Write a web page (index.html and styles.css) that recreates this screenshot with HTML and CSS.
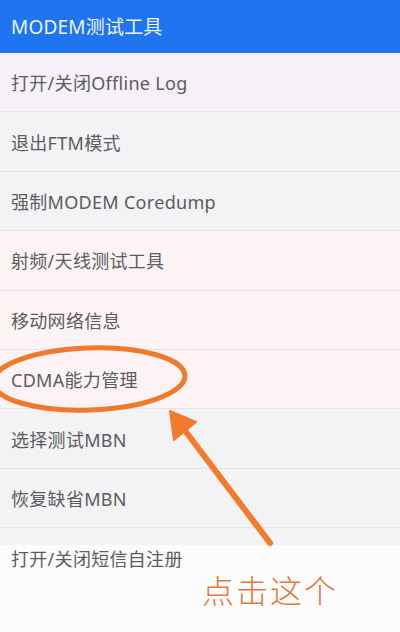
FILE: index.html
```html
<!DOCTYPE html>
<html lang="zh">
<head>
<meta charset="utf-8">
<link rel="stylesheet" href="styles.css">
</head>
<body>
<div class="screen">
  <header class="appbar">MODEM测试工具</header>
  <ul class="menu">
    <li class="item tint-a">打开/关闭Offline Log</li>
    <li class="item">退出FTM模式</li>
    <li class="item">强制MODEM Coredump</li>
    <li class="item tint-b">射频/天线测试工具</li>
    <li class="item tint-b">移动网络信息</li>
    <li class="item tint-b">CDMA能力管理</li>
    <li class="item">选择测试MBN</li>
    <li class="item">恢复缺省MBN</li>
    <li class="item last">打开/关闭短信自注册</li>
  </ul>
  <svg class="annot" width="400" height="632" viewBox="0 0 400 632">
    <ellipse cx="89" cy="379" rx="96" ry="31" transform="rotate(-2 89 379)" fill="none" stroke="#f07a2c" stroke-width="5"/>
    <line x1="270" y1="543" x2="180" y2="424" stroke="#f47a2e" stroke-width="6" stroke-linecap="round"/>
    <polygon points="170,411 196,422 174,440" fill="#f47a2e" stroke="#f47a2e" stroke-width="2" stroke-linejoin="round"/>
  </svg>
  <div class="note">点击这个</div>
</div>
</body>
</html>
```
FILE: styles.css
```css
html, body {
  margin: 0;
  padding: 0;
}
body {
  width: 400px;
  height: 632px;
  overflow: hidden;
  background: #ffffff;
  font-family: "Noto Sans", "Noto Sans CJK SC", sans-serif;
}
.screen {
  position: relative;
  width: 400px;
  height: 632px;
  overflow: hidden;
  background: #fdfcfd;
}
.appbar {
  height: 53px;
  box-sizing: border-box;
  background: #1f74ef;
  color: #eef4ff;
  font-size: 19px;
  letter-spacing: 0.2px;
  display: flex;
  align-items: center;
  padding: 0 0 2px 11px;
}
.menu {
  list-style: none;
  margin: 0;
  padding: 0;
}
.item {
  height: 59.4px;
  box-sizing: border-box;
  border-bottom: 1px solid #e4e3e6;
  background: #f3f3f5;
  color: #5c5b5f;
  font-size: 18px;
  letter-spacing: 0.3px;
  display: flex;
  align-items: center;
  padding: 0 0 0 11px;
}
.tint-a {
  background: #f5f1f6;
}
.tint-b {
  background: #fdf3f5;
}
.last {
  border-bottom: none;
  background: linear-gradient(#f3f3f4 0, #f3f3f4 17px, #fdfcfd 17px);
}
.annot {
  position: absolute;
  left: 0;
  top: 0;
  pointer-events: none;
}
.note {
  position: absolute;
  left: 202px;
  top: 566px;
  font-family: "Noto Sans CJK SC", sans-serif;
  font-size: 32px;
  font-weight: 300;
  color: #e27a3a;
  letter-spacing: 2px;
}
```
